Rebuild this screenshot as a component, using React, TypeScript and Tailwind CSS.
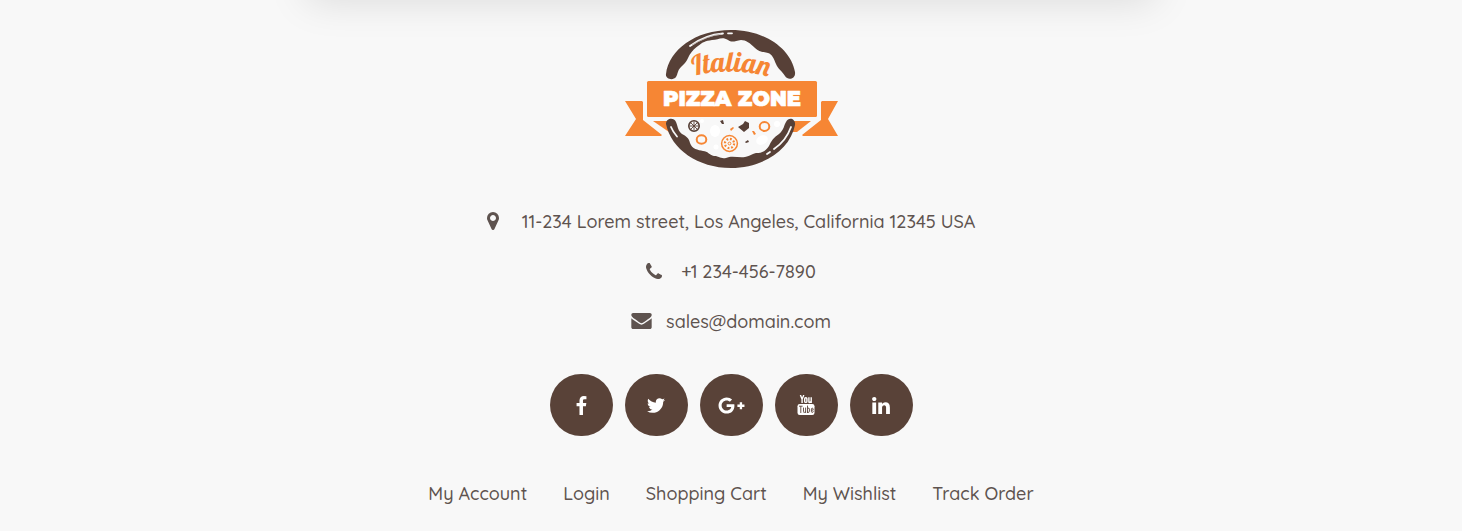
import type { ReactNode } from "react";
import { FaGooglePlusG } from "react-icons/fa";

const PIN =
  "M1152 640q0-106-75-181t-181-75-181 75-75 181 75 181 181 75 181-75 75-181zm256 0q0 109-33 179l-364 774q-16 33-47.5 52t-67.5 19-67.5-19-46.5-52l-365-774q-33-70-33-179 0-212 150-362t362-150 362 150 150 362z";
const PHONE =
  "M1600 1240q0 27-10 70.5t-21 68.5q-21 50-122 106-94 51-186 51-27 0-53-3.5t-57.5-12.5-47-14.5-55.5-20.5-49-18q-98-35-175-83-127-79-264-216t-216-264q-48-77-83-175-3-9-18-49t-20.5-55.5-14.5-47-12.5-57.5-3.5-53q0-92 51-186 56-101 106-122 25-11 68.5-21t70.5-10q14 0 21 3 18 6 53 76 11 19 30 54t35 63.5 31 53.5q3 4 17.5 25t21.5 35.5 7 28.5q0 20-28.5 50t-62 55-62 53-28.5 46q0 9 5 22.5t8.5 20.5 14 24 11.5 19q76 137 174 235t235 174q2 1 19 11.5t24 14 20.5 8.5 22.5 5q18 0 46-28.5t53-62 55-62 50-28.5q14 0 28.5 7t35.5 21.5 25 17.5q25 15 53.5 31t63.5 35 54 30q70 35 76 53 3 7 3 21z";
const ENVELOPE =
  "M1792 710v794q0 66-47 113t-113 47h-1472q-66 0-113-47t-47-113v-794q44 49 101 87 362 246 497 345 57 42 92.5 65.5t94.5 48 110 24.5h2q51 0 110-24.5t94.5-48 92.5-65.5q170-123 498-345 57-39 100-87zm0-294q0 79-49 151t-122 123q-376 261-468 325-10 7-42.5 31t-54 38.5-52 32.5-57.5 27-50 9h-2q-23 0-50-9t-57.5-27-52-32.5-54-38.5-42.5-31q-91-64-262-182.5t-205-142.5q-62-42-117-115.5t-55-136.5q0-78 41.5-130t118.5-52h1472q65 0 112.5 47t47.5 113z";
const FACEBOOK =
  "M1343 12v264h-157q-86 0-116 36t-30 108v189h293l-39 296h-254v759h-306v-759h-255v-296h255v-218q0-186 104-288.5t277-102.5q147 0 228 12z";
const TWITTER =
  "M1684 408q-67 98-162 167 1 14 1 42 0 130-38 259.5t-115.5 248.5-184.5 210.5-258 146-323 54.5q-271 0-496-145 35 4 78 4 225 0 401-138-105-2-188-64.5t-114-159.5q33 5 61 5 43 0 85-11-112-23-185.5-111.5t-73.5-205.5v-4q68 38 146 41-66-44-105-115t-39-154q0-88 44-163 121 149 294.5 238.5t371.5 99.5q-8-38-8-74 0-134 94.5-228.5t228.5-94.5q140 0 236 102 109-21 205-78-37 115-142 178 93-10 186-50z";
const LINKEDIN =
  "M477 625v991h-330v-991h330zm21-306q1 73-50.5 122t-135.5 49h-2q-82 0-132-49t-50-122q0-74 51.5-122.5t134.5-48.5 133 48.5 51 122.5zm1166 729v568h-329v-530q0-105-40.5-164.5t-126.5-59.5q-63 0-105.5 34.5t-63.5 85.5q-11 30-11 81v553h-329q2-399 2-647t-1-296l-1-48h329v144h-2q20-32 41-56t56.5-52 87-43.5 114.5-15.5q171 0 275 113.5t104 332.5z";

function Glyph({ d, box, className }: { d: string; box: string; className: string }) {
  return (
    <svg viewBox={box} className={className} fill="currentColor" aria-hidden="true">
      <path d={d} />
    </svg>
  );
}

function YouTubeIcon() {
  return (
    <svg viewBox="0 0 18 20" className="h-5 w-[18px]" aria-hidden="true">
      <g fill="none" stroke="#fff" strokeWidth="1.4">
        <path d="M3.4 0l1.7 4.2L6.8 0M5.1 4v4" />
        <rect x="7.7" y="2.8" width="2.2" height="4.6" rx="1" />
        <path d="M11.9 2.2v4.6q0 .8.8.6l1.4-.8M14.2 2.2V8" />
      </g>
      <rect x="0.5" y="9" width="17" height="11" rx="2.2" fill="#fff" />
      <g fill="none" stroke="#594238" strokeWidth="0.9">
        <path d="M2 11.2h3.6M3.8 11.2V18M6.5 12.6v4q0 1 .8.8l1.2-.8M8.6 12.6V18M10.5 10.6V18M10.6 13.3q1.8-.8 1.8.8v2.2q0 1.6-1.8.9M16.2 16v.4q0 1-.9 1t-.9-1v-2.2q0-1 .9-1t.9 1v.9h-1.8" />
      </g>
    </svg>
  );
}

function Logo() {
  return (
    <svg viewBox="0 0 213 138" className="h-[138px] w-[213px]" role="img" aria-label="Italian Pizza Zone">
      <g fill="#f68634">
        <path d="M0 71H17L18 72V90L37 105 36 106H0L11 89Z" />
        <path d="M213 71H197L196 72V90L177 105 178 106H213L203 89Z" />
        <path d="M28 91H43L47 102 44 102Z" />
        <path d="M186 91H168V102L172 102Z" />
        <rect x="22" y="51" width="170" height="36" rx="1.5" />
      </g>
      <g fill="#574037">
        <path d="M41 44C44 20 70 0 106 0C140 0 166 19 170 42C171 49 163 51 160 46C157 41 153 39 151 34C149 29 147 24 143 23C138 22 134 22 130 18C125 13 121 10 116 10C110 11 107 13 103 10C97 6 93 10 87 10C80 11 78 12 73 16C68 20 67 21 64 26C61 33 59 34 56 37C52 41 53 44 51 47C48 51 40 49 41 44Z" />
        <path d="M41 94C41 88 49 87 51 92C53 97 53 101 57 104C61 106 64 108 65 113C67 119 73 120 78 121C83 121 84 125 89 126C94 126 95 129 101 128C107 125 113 128 120 127C126 126 126 124 131 123C137 123 141 121 144 116C146 111 149 107 154 104C159 100 159 95 161 92C164 86 171 89 170 95C165 120 138 138 106 138C73 138 46 119 41 94Z" />
      </g>
      <g fill="none" stroke="#f8f8f8" strokeLinecap="round" strokeWidth="1.8">
        <path d="M65 16Q80 5 98 3.5M103 3.3H107M46 97Q48 102 52 106.500M166 97Q161 111 149 119M145 122L142 124" />
      </g>
      <path d="M67 15Q82 6 96 4" fill="none" stroke="#8e7c74" strokeWidth="0.5" />
      <path id="scriptLine" d="M64 47Q106 36 148 48" fill="none" />
      <text fill="#f68634" fontFamily="Lobster, Liberation Serif, serif" fontWeight="400" fontSize="28" textAnchor="middle">
        <textPath href="#scriptLine" startOffset="50%">
          Italian
        </textPath>
      </text>
      <text x="107" y="76" fill="#fff" stroke="#fff" strokeWidth="0.5" strokeLinejoin="round" fontFamily="Montserrat, DejaVu Sans, sans-serif" fontWeight="900" fontSize="21" textAnchor="middle">
        PIZZA ZONE
      </text>
      <g fill="#fff">
        <ellipse cx="90" cy="101" rx="5" ry="6" />
        <ellipse cx="137" cy="110" rx="6" ry="4.500" transform="rotate(-25 137 110)" />
        <circle cx="152" cy="94" r="3" />
        <circle cx="77" cy="91" r="2" />
        <circle cx="91" cy="117" r="2.500" />
      </g>
      <g fill="none" stroke="#574037">
        <circle cx="69" cy="96" r="5.200" strokeWidth="1.600" />
        <path d="M69 91.500V100.500M64.500 96H73.500M66 93L72 99M72 93L66 99" strokeWidth="0.900" />
      </g>
      <g fill="none" stroke="#f68634">
        <ellipse cx="76.500" cy="109.500" rx="4.800" ry="4.200" strokeWidth="2" />
        <ellipse cx="139.500" cy="96.500" rx="4.800" ry="4.400" strokeWidth="2" />
        <circle cx="104.500" cy="113.500" r="7.900" strokeWidth="1.500" />
        <circle cx="104.500" cy="113.500" r="4.600" strokeWidth="2.200" strokeDasharray="1.800 1.800" />
        <circle cx="104.500" cy="113.500" r="1.400" strokeWidth="1" />
      </g>
      <g fill="#574037">
        <path d="M113 97L118 94 120 91 124 93 124 98 119 102Z" />
        <path d="M95 91L98 90 99 94 97 94Z" />
        <path d="M120 112L123 110 124 112 121 113Z" />
      </g>
      <path d="M105 99L108 97 109 98 106 101ZM127 101L129 101 131 104 129 105Z" fill="#f68634" />
    </svg>
  );
}

function ContactRow({ icon, children }: { icon: ReactNode; children: ReactNode }) {
  return (
    <li className="flex h-[50px] items-center justify-center">
      <span className="flex w-[35px] shrink-0 items-center pb-0.5">{icon}</span>
      {children}
    </li>
  );
}

const socials = [
  { name: "Facebook", icon: <Glyph d={FACEBOOK} box="479 0 864 1664" className="h-[19px] w-[11px]" /> },
  { name: "Twitter", icon: <Glyph d={TWITTER} box="108 256 1576 1280" className="h-[15px] w-[18px]" /> },
  { name: "Google Plus", icon: <FaGooglePlusG className="size-[27px]" /> },
  { name: "YouTube", icon: <YouTubeIcon /> },
  { name: "LinkedIn", icon: <Glyph d={LINKEDIN} box="128 148 1536 1468" className="h-[17px] w-[18px]" /> },
];

const links = ["My Account", "Login", "Shopping Cart", "My Wishlist", "Track Order"];

export default function App() {
  return (
    <div className="min-h-screen overflow-hidden bg-[#f8f8f8] font-[Quicksand,Lato,sans-serif] text-lg font-medium text-[#5e534f]">
      <div className="mx-auto -mt-10 h-10 w-[58%] shadow-[0_0_40px_rgba(0,0,0,0.13)]" />
      <footer className="flex flex-col items-center px-4 pt-[30px] pb-5">
        <a href="#home">
          <Logo />
        </a>
        <ul className="mt-[29px]">
          <ContactRow icon={<Glyph d={PIN} box="384 128 1024 1536" className="h-[18px] w-3" />}>
            <address className="not-italic">11-234 Lorem street, Los Angeles, California 12345 USA</address>
          </ContactRow>
          <ContactRow icon={<Glyph d={PHONE} box="192 128 1408 1408" className="size-4" />}>
            <a href="tel:+12344567890">+1 234-456-7890</a>
          </ContactRow>
          <ContactRow icon={<Glyph d={ENVELOPE} box="0 256 1792 1408" className="h-4 w-[21px]" />}>
            <a href="mailto:sales@domain.com">sales@domain.com</a>
          </ContactRow>
        </ul>
        <ul className="mt-[27px] flex gap-3">
          {socials.map((s) => (
            <li key={s.name}>
              <a href="#social" aria-label={s.name} className="flex h-[62px] w-[63px] items-center justify-center rounded-full bg-[#594238] text-white">
                {s.icon}
              </a>
            </li>
          ))}
        </ul>
        <nav className="mt-11">
          <ul className="flex flex-wrap justify-center gap-x-9">
            {links.map((l) => (
              <li key={l}>
                <a href="#page">{l}</a>
              </li>
            ))}
          </ul>
        </nav>
      </footer>
    </div>
  );
}
